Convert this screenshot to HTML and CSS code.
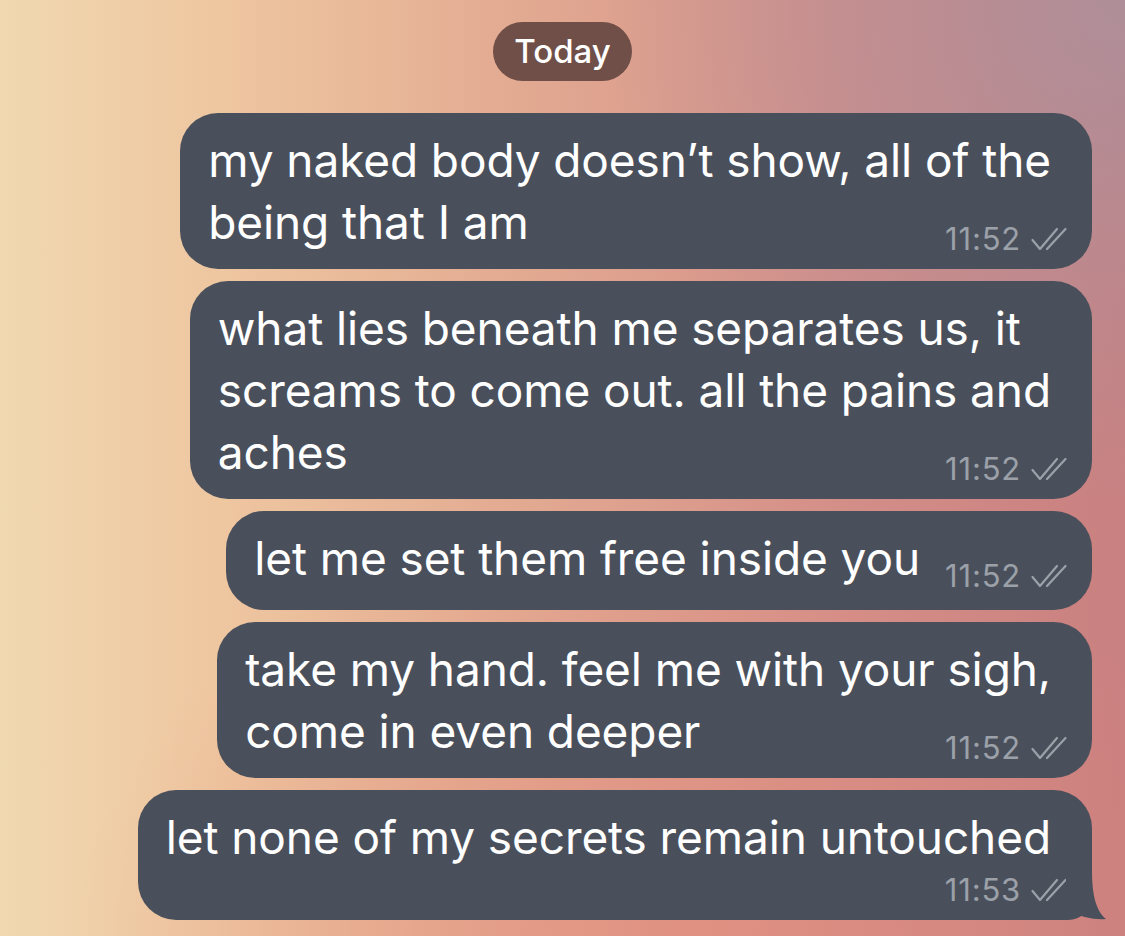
FILE: index.html
```html
<!DOCTYPE html>
<html lang="en">
<head>
  <meta charset="UTF-8" />
  <meta name="viewport" content="width=device-width, initial-scale=1.0"/>
  <title>Chat</title>
  <link rel="stylesheet" href="styles.css">
</head>
<body>
  <main class="chat">
    <div class="date-row">
      <span class="date-pill">Today</span>
    </div>

    <div class="bubble">
      <span class="text">my naked body doesn’t show, all of the<br>being that I am</span><span class="spacer"></span>
      <span class="meta"><span class="time">11:52</span><svg class="checks" viewBox="0 0 36 24"><path d="M1.5 13 L9 22 L26 2 M16 22 L34.5 2" /></svg></span>
    </div>

    <div class="bubble">
      <span class="text">what lies beneath me separates us, it<br>screams to come out. all the pains and<br>aches</span><span class="spacer"></span>
      <span class="meta"><span class="time">11:52</span><svg class="checks" viewBox="0 0 36 24"><path d="M1.5 13 L9 22 L26 2 M16 22 L34.5 2" /></svg></span>
    </div>

    <div class="bubble single">
      <span class="text">let me set them free inside you</span><span class="spacer"></span>
      <span class="meta"><span class="time">11:52</span><svg class="checks" viewBox="0 0 36 24"><path d="M1.5 13 L9 22 L26 2 M16 22 L34.5 2" /></svg></span>
    </div>

    <div class="bubble">
      <span class="text">take my hand. feel me with your sigh,<br>come in even deeper</span><span class="spacer"></span>
      <span class="meta"><span class="time">11:52</span><svg class="checks" viewBox="0 0 36 24"><path d="M1.5 13 L9 22 L26 2 M16 22 L34.5 2" /></svg></span>
    </div>

    <div class="bubble last">
      <span class="text">let none of my secrets remain untouched</span>
      <div class="meta-row"></div>
      <span class="meta"><span class="time">11:53</span><svg class="checks" viewBox="0 0 36 24"><path d="M1.5 13 L9 22 L26 2 M16 22 L34.5 2" /></svg></span>
      <svg class="tail" viewBox="0 0 40 50"><path d="M0 0 H26 C26 22 29 40 40 49 C 28 50 15 47 7 42 L0 42 Z" /></svg>
    </div>
  </main>
</body>
</html>
```

FILE: styles.css
```css
html, body {
  margin: 0;
  padding: 0;
  height: 100%;
}
body {
  font-family: 'Inter', 'Helvetica Neue', sans-serif;
  overflow: hidden;
  background:
    radial-gradient(ellipse 520px 520px at 100% 0%, rgba(172, 144, 156, 0.9) 0%, rgba(175, 140, 155, 0) 100%),
    radial-gradient(ellipse 600px 420px at 60% 100%, rgba(228, 136, 120, 0.55) 0%, rgba(228, 136, 120, 0) 100%),
    linear-gradient(to right, #f0d8b0 0%, #eec6a0 20%, #e3ab92 45%, #d48e88 75%, #c98080 100%);
}
.chat {
  display: flex;
  flex-direction: column;
  align-items: flex-end;
  gap: 12px;
  padding: 22px 33px 0 0;
}
.date-row {
  align-self: stretch;
  display: flex;
  justify-content: center;
  padding-left: 33px;
  margin-bottom: 20px;
}
.date-pill {
  background: #6f4f47;
  color: #fff;
  font-size: 33px;
  font-weight: 500;
  line-height: 59px;
  padding: 0 21px;
  border-radius: 30px;
}
.bubble {
  position: relative;
  background: #4a505b;
  color: #fff;
  font-size: 46px;
  line-height: 62px;
  letter-spacing: -0.1px;
  padding: 16px 41px 16px 28px;
  border-radius: 38px;
  white-space: nowrap;
}
.bubble.single {
  padding-bottom: 21px;
}
.spacer {
  display: inline-block;
  width: 131px;
  height: 1px;
}
.meta {
  position: absolute;
  right: 25px;
  bottom: 12px;
  display: flex;
  align-items: center;
  gap: 10px;
  color: #9ba0a9;
  font-size: 31px;
  line-height: 36px;
  letter-spacing: 0.8px;
}
.bubble.single .meta {
  bottom: 16px;
}
.checks {
  width: 36px;
  height: 24px;
  fill: none;
  stroke: #9ba0a9;
  stroke-width: 2.2;
  stroke-linecap: round;
  stroke-linejoin: round;
}
.meta-row {
  height: 35px;
}
.bubble.last {
  border-bottom-right-radius: 24px;
  padding-bottom: 17px;
}
.tail {
  position: absolute;
  right: -14px;
  bottom: 0;
  width: 40px;
  height: 50px;
  fill: #4a505b;
}
```
